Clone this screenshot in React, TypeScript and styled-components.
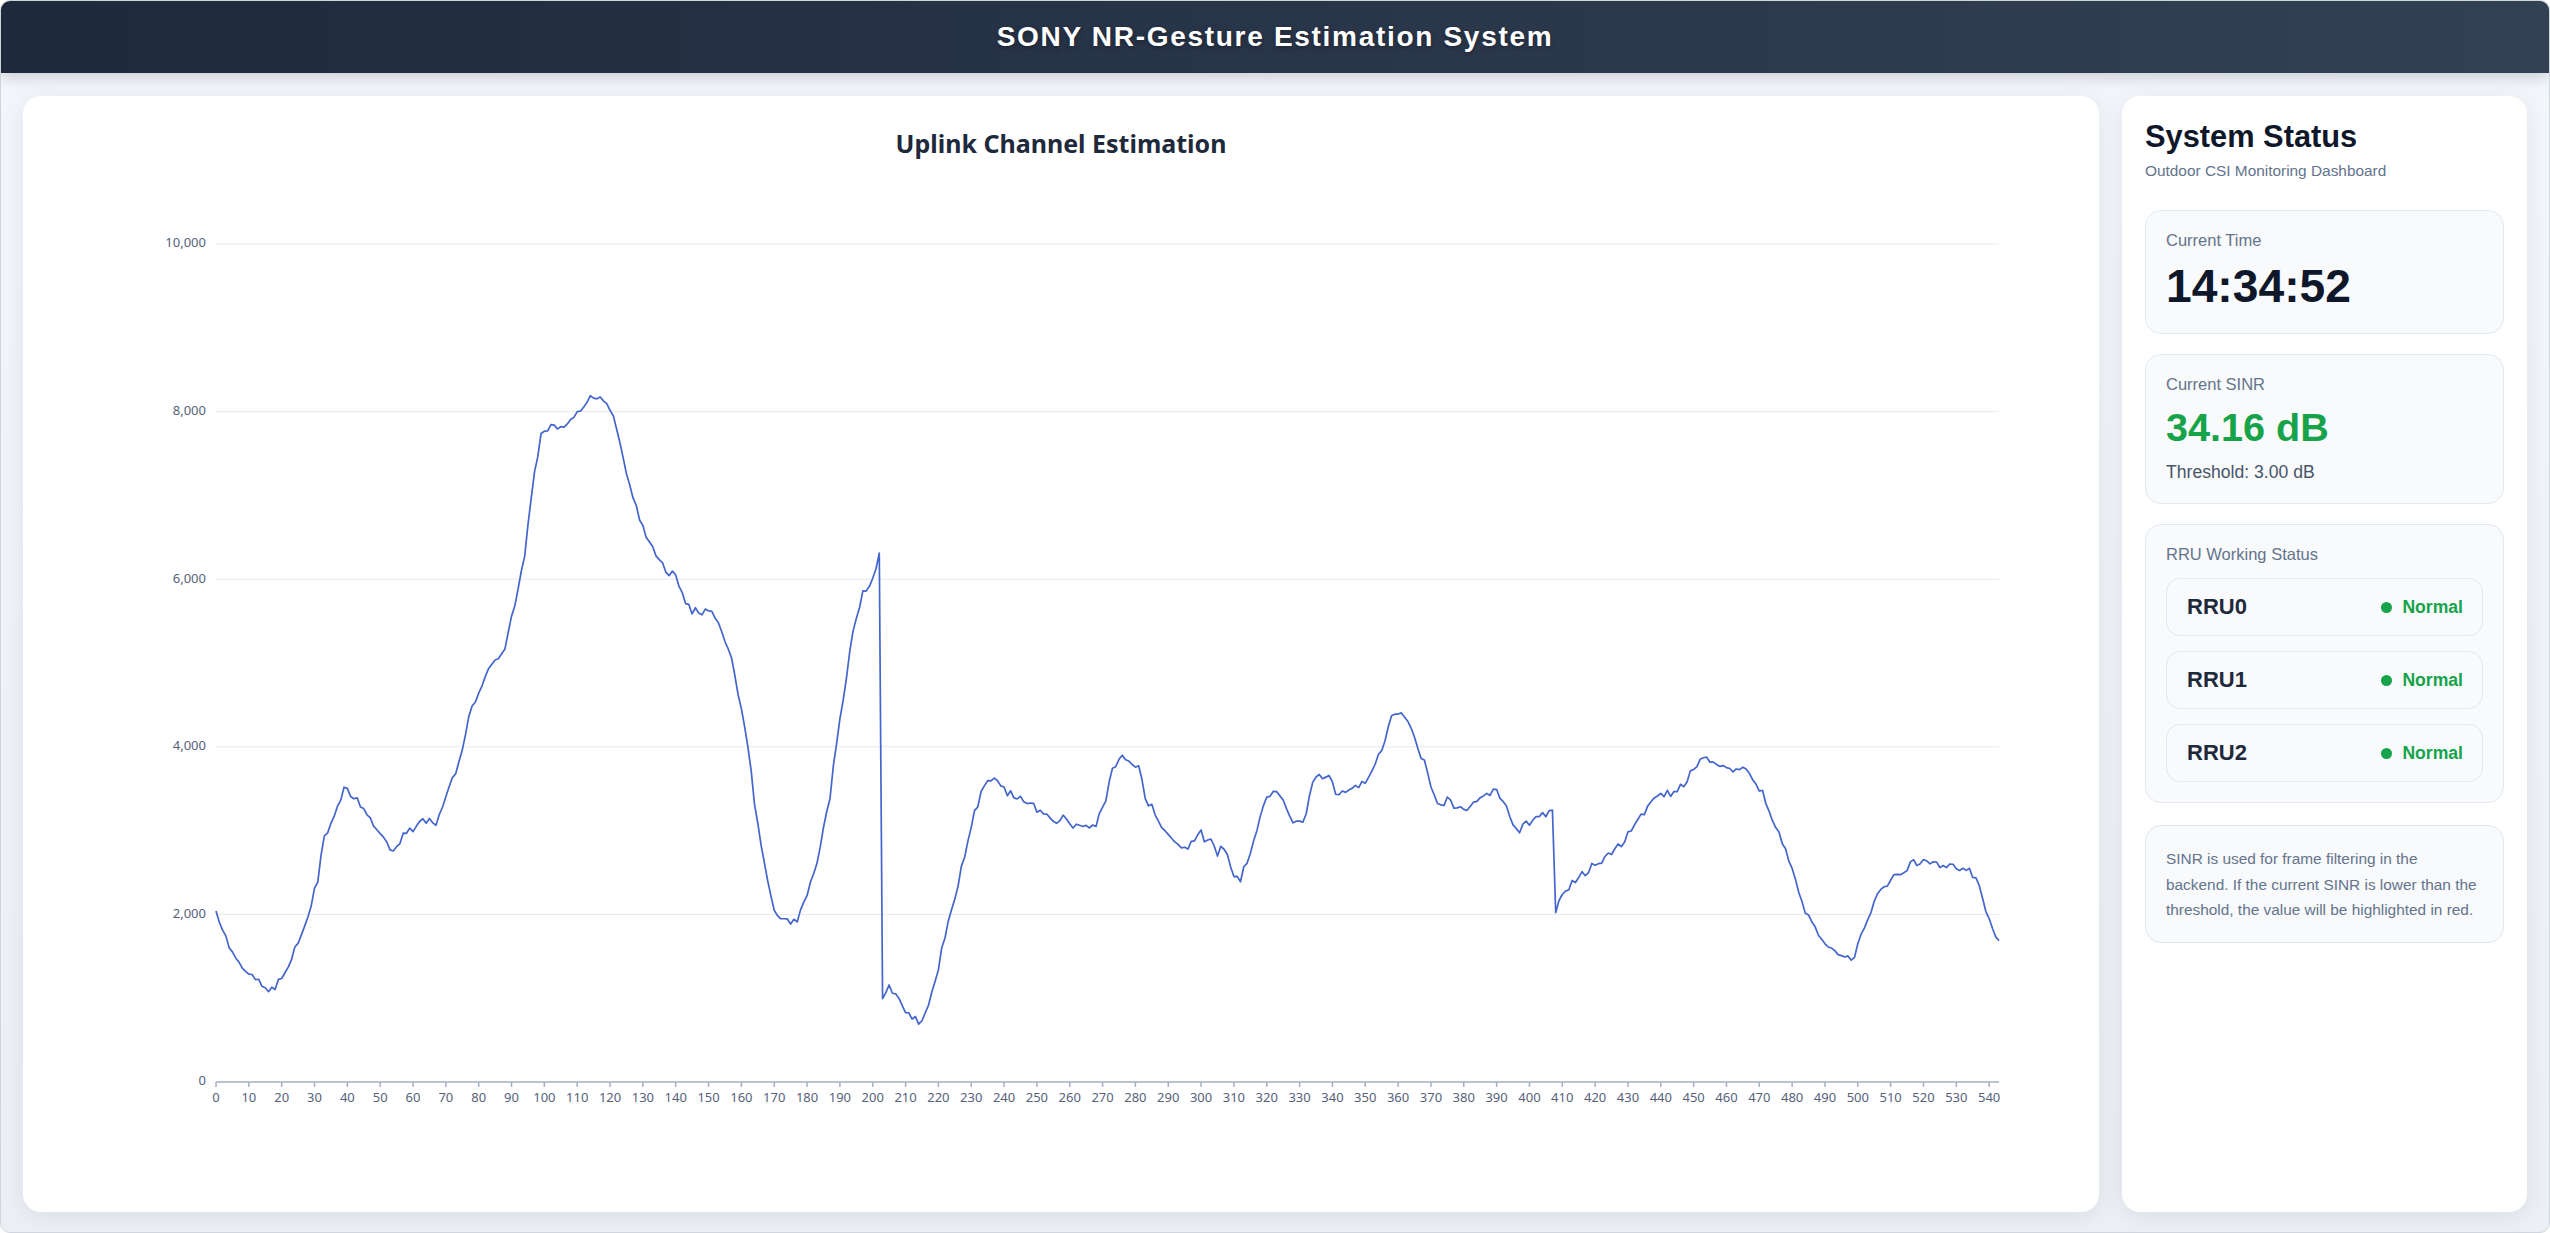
import React, { useMemo } from 'react';
import styled, { createGlobalStyle } from 'styled-components';

const SANS = `'Liberation Sans', Arial, sans-serif`;
const CHART_FONT = `'Noto Sans', 'Open Sans', sans-serif`;

const GREEN = '#16a34a';
const SLATE_900 = '#0f172a';
const SLATE_800 = '#1e293b';
const SLATE_600 = '#475569';
const SLATE_500 = '#64748b';
const BORDER = '#e2e8f0';
const BOX_BG = '#f8fafc';

// rough shape of the channel estimation trace, [index, value]
const KEYS: [number, number][] = [
  [0, 2050], [3.5, 1650], [6, 1456], [8.4, 1360], [11, 1262], [13.4, 1204], [16, 1068], [17, 1087],
  [21, 1320], [26, 1748], [28, 2000], [31, 2427], [33, 2913], [37, 3300], [39, 3480], [43, 3400],
  [45.6, 3200], [49, 3010], [53, 2777], [54, 2740], [57, 2950], [60.4, 3010], [63, 3127], [67, 3088],
  [70, 3400], [74, 3787], [77, 4370], [80, 4600], [84, 4990], [88, 5200], [90, 5530], [94, 6310],
  [97, 7280], [99, 7710], [102.5, 7826], [105, 7807], [107.5, 7900], [110, 8000], [112.5, 8020],
  [114, 8195], [117.4, 8156], [120, 8060], [122, 7770], [125, 7280], [127, 6990], [130, 6600],
  [132, 6450], [135, 6214], [137, 6117], [140, 6020], [142, 5826], [145, 5573], [146, 5630],
  [148, 5573], [150, 5630], [152, 5535], [154.5, 5340], [157, 5050], [159.5, 4560], [162, 3980],
  [164.5, 3200], [167, 2620], [169.4, 2136], [172, 1940], [174, 1903], [177, 1940], [179, 2136],
  [182, 2466], [184, 2816], [187, 3400], [189, 4078], [192, 4855], [194, 5340], [197, 5826],
  [199, 5960], [200.6, 6020], [202, 6350], [203, 970], [204.6, 1165], [206.6, 1030], [209, 913],
  [211.5, 777], [214, 720], [216.5, 835], [219, 1165], [221.4, 1650], [224, 2040], [226.4, 2427],
  [229, 2913], [231, 3204], [234, 3554], [236.3, 3650], [239, 3500], [241, 3456], [244, 3400],
  [246, 3340], [251, 3243], [256, 3107], [258.6, 3165], [261, 3050], [263.6, 3107], [266, 3010],
  [268.5, 3107], [271, 3400], [273.5, 3787], [276, 3864], [278.4, 3787], [281, 3787], [283, 3400],
  [286, 3204], [288, 3010], [291, 2913], [293, 2816], [296, 2777], [298, 2913], [300, 2970],
  [302, 2855], [303, 2913], [305, 2720], [307, 2816], [310, 2466], [312, 2427], [315.6, 2816],
  [318, 3204], [320.5, 3400], [323, 3456], [325.5, 3300], [328, 3107], [330.4, 3107], [332, 3204],
  [334, 3590], [337, 3650], [339, 3690], [341, 3437], [344, 3495], [348, 3495], [350, 3590],
  [352.7, 3748], [355, 3980], [357.7, 4330], [360, 4427], [361.6, 4370], [363.6, 4270], [366, 3980],
  [368.6, 3787], [371, 3400], [373, 3300], [375, 3360], [377.5, 3300], [380, 3262], [382.4, 3300],
  [385, 3437], [387.4, 3437], [390, 3476], [392, 3360], [395, 3107], [397, 3010], [400, 3107],
  [402, 3204], [405, 3204], [407, 3262], [408, 2040], [410, 2233], [412, 2330], [414.6, 2427],
  [419.6, 2583], [424.6, 2719], [429.5, 2913], [434.5, 3204], [439, 3400], [442, 3456], [444, 3437],
  [447, 3554], [449, 3690], [452, 3845], [454, 3864], [457, 3787], [459, 3787], [461.7, 3690],
  [464, 3728], [466.7, 3690], [469, 3590], [471.6, 3400], [474, 3107], [476.6, 2913], [479, 2620],
  [481.5, 2330], [484, 2040], [486.5, 1884], [489, 1709], [491.4, 1592], [494, 1495], [496.4, 1456],
  [499, 1495], [501, 1748], [504, 2000], [506, 2272], [509, 2369], [511, 2466], [514, 2525],
  [516, 2602], [518.7, 2622], [521, 2641], [524, 2583], [526, 2544], [528.6, 2563], [531, 2525],
  [533.5, 2544], [536, 2427], [538.5, 2136], [541, 1845], [543, 1650],
];

const POINTS = 544;

const buildSeries = () => {
  let seed = 20240611;
  const rand = () => {
    seed = (seed * 16807) % 2147483647;
    return seed / 2147483647;
  };
  const out: number[] = [];
  let k = 0;
  for (let i = 0; i < POINTS; i++) {
    while (k < KEYS.length - 2 && KEYS[k + 1][0] < i) k++;
    const [x0, y0] = KEYS[k];
    const [x1, y1] = KEYS[k + 1];
    const t = x1 === x0 ? 0 : Math.min(1, Math.max(0, (i - x0) / (x1 - x0)));
    out.push(y0 + (y1 - y0) * t + (rand() - 0.5) * 90);
  }
  return out;
};

// chart geometry (px, inside the svg)
const W = 2028;
const H = 1022;
const PLOT_L = 169;
const PLOT_R = 1952;
const PLOT_T = 78;
const PLOT_B = 916;
const Y_MAX = 10000;

const xAt = (i: number) => PLOT_L + (i * (PLOT_R - PLOT_L)) / (POINTS - 1);
const yAt = (v: number) => PLOT_B - (v / Y_MAX) * (PLOT_B - PLOT_T);

const GlobalStyle = createGlobalStyle`
  html, body {
    margin: 0;
    padding: 0;
    background: #ffffff;
  }
  * {
    box-sizing: border-box;
  }
`;

const UplinkChart = () => {
  const series = useMemo(buildSeries, []);
  const path = series
    .map((v, i) => `${i === 0 ? 'M' : 'L'}${xAt(i).toFixed(2)},${yAt(v).toFixed(2)}`)
    .join(' ');
  const yTicks = [0, 2000, 4000, 6000, 8000, 10000];
  const xTicks = Array.from({ length: 55 }, (_, i) => i * 10);

  return (
    <ChartSvg width={W} height={H} viewBox={`0 0 ${W} ${H}`}>
      {yTicks.map((v) => (
        <g key={v}>
          {v > 0 && <GridLine x1={PLOT_L} x2={PLOT_R} y1={yAt(v)} y2={yAt(v)} />}
          <AxisLabel x={PLOT_L - 10} y={yAt(v)} textAnchor="end" dominantBaseline="middle">
            {v.toLocaleString('en-US')}
          </AxisLabel>
        </g>
      ))}
      <AxisLine x1={PLOT_L} x2={PLOT_R} y1={PLOT_B} y2={PLOT_B} />
      {xTicks.map((i) => (
        <g key={i}>
          <AxisLine x1={xAt(i)} x2={xAt(i)} y1={PLOT_B} y2={PLOT_B + 5} />
          <AxisLabel x={xAt(i)} y={PLOT_B + 20} textAnchor="middle">
            {i}
          </AxisLabel>
        </g>
      ))}
      <Trace d={path} />
    </ChartSvg>
  );
};

const RRUS = ['RRU0', 'RRU1', 'RRU2'];

const App = () => (
  <>
    <GlobalStyle />
    <Frame>
      <Header>
        <HeaderTitle>SONY NR-Gesture Estimation System</HeaderTitle>
      </Header>
      <Main>
        <ChartCard>
          <ChartTitle>Uplink Channel Estimation</ChartTitle>
          <UplinkChart />
        </ChartCard>
        <StatusPanel>
          <PanelTitle>System Status</PanelTitle>
          <PanelSubtitle>Outdoor CSI Monitoring Dashboard</PanelSubtitle>
          <BoxStack>
            <InfoBox>
              <BoxLabel>Current Time</BoxLabel>
              <TimeValue>14:34:52</TimeValue>
            </InfoBox>
            <InfoBox>
              <BoxLabel>Current SINR</BoxLabel>
              <SinrValue $ok>34.16 dB</SinrValue>
              <Threshold>Threshold: 3.00 dB</Threshold>
            </InfoBox>
            <InfoBox>
              <BoxLabel>RRU Working Status</BoxLabel>
              <RruList>
                {RRUS.map((name) => (
                  <RruRow key={name}>
                    <RruName>{name}</RruName>
                    <RruState>
                      <Dot />
                      Normal
                    </RruState>
                  </RruRow>
                ))}
              </RruList>
            </InfoBox>
            <NoteBox>
              SINR is used for frame filtering in the backend. If the current SINR is lower than the
              threshold, the value will be highlighted in red.
            </NoteBox>
          </BoxStack>
        </StatusPanel>
      </Main>
    </Frame>
  </>
);

export default App;

const Frame = styled.div`
  display: flex;
  flex-direction: column;
  height: 100vh;
  border: 1px solid #cfd5dd;
  border-radius: 10px;
  overflow: hidden;
  background: linear-gradient(180deg, #f3f6fa 0%, #eceff4 100%);
  font-family: ${SANS};
`;

const Header = styled.header`
  display: flex;
  align-items: center;
  justify-content: center;
  flex-shrink: 0;
  height: 72px;
  background: linear-gradient(90deg, #1e293b 0%, #334155 100%);
  box-shadow: 0 4px 14px rgba(15, 23, 42, 0.18);
  position: relative;
  z-index: 1;
`;

const HeaderTitle = styled.h1`
  margin: 0;
  font-family: ${SANS};
  font-size: 28px;
  font-weight: 700;
  letter-spacing: 1.7px;
  color: #ffffff;
  text-shadow: 0 2px 4px rgba(0, 0, 0, 0.3);
`;

const Main = styled.main`
  display: flex;
  flex: 1;
  gap: 23px;
  padding: 23px 22px 20px 22px;
  min-height: 0;
`;

const ChartCard = styled.section`
  display: flex;
  flex-direction: column;
  flex: 1;
  padding: 24px;
  background: #ffffff;
  border-radius: 18px;
  box-shadow: 0 4px 24px rgba(15, 23, 42, 0.08);
  overflow: hidden;
`;

const ChartTitle = styled.h2`
  margin: 0;
  height: 46px;
  line-height: 46px;
  text-align: center;
  font-family: ${CHART_FONT};
  font-size: 25px;
  font-weight: 700;
  color: ${SLATE_800};
`;

const ChartSvg = styled.svg`
  display: block;
  flex-shrink: 0;
`;

const GridLine = styled.line`
  stroke: #e6e9ef;
  stroke-width: 1;
`;

const AxisLine = styled.line`
  stroke: #a3afc2;
  stroke-width: 1.5;
`;

const AxisLabel = styled.text`
  font-family: ${CHART_FONT};
  font-size: 13px;
  fill: #56627a;
`;

const Trace = styled.path`
  fill: none;
  stroke: #4466cc;
  stroke-width: 1.7;
  stroke-linejoin: round;
`;

const StatusPanel = styled.aside`
  display: flex;
  flex-direction: column;
  width: 405px;
  flex-shrink: 0;
  padding: 23px;
  background: #ffffff;
  border-radius: 18px;
  box-shadow: 0 4px 24px rgba(15, 23, 42, 0.08);
`;

const PanelTitle = styled.h2`
  margin: 0;
  font-size: 30.8px;
  font-weight: 700;
  color: ${SLATE_900};
`;

const PanelSubtitle = styled.p`
  margin: 7px 0 0;
  font-size: 15.4px;
  color: ${SLATE_500};
`;

const BoxStack = styled.div`
  display: flex;
  flex-direction: column;
  gap: 20px;
  margin-top: 30px;
`;

const InfoBox = styled.div`
  display: flex;
  flex-direction: column;
  padding: 20px 20px 20px;
  background: ${BOX_BG};
  border: 1px solid ${BORDER};
  border-radius: 16px;
`;

const BoxLabel = styled.div`
  font-size: 16.5px;
  color: ${SLATE_500};
`;

const TimeValue = styled.div`
  margin-top: 9px;
  font-size: 46.2px;
  font-weight: 700;
  color: ${SLATE_900};
`;

const SinrValue = styled.div<{ $ok?: boolean }>`
  margin-top: 11px;
  font-size: 39.6px;
  font-weight: 700;
  color: ${(p) => (p.$ok ? GREEN : '#dc2626')};
`;

const Threshold = styled.div`
  margin-top: 12px;
  font-size: 17.6px;
  color: ${SLATE_600};
`;

const RruList = styled.div`
  display: flex;
  flex-direction: column;
  gap: 15px;
  margin-top: 14px;
`;

const RruRow = styled.div`
  display: flex;
  align-items: center;
  justify-content: space-between;
  height: 58px;
  padding: 0 19px 0 20px;
  background: ${BOX_BG};
  border: 1px solid ${BORDER};
  border-radius: 14px;
`;

const RruName = styled.span`
  font-size: 22px;
  font-weight: 700;
  color: ${SLATE_800};
`;

const RruState = styled.span`
  display: flex;
  align-items: center;
  gap: 10px;
  font-size: 17.6px;
  font-weight: 700;
  color: ${GREEN};
`;

const Dot = styled.span`
  width: 11px;
  height: 11px;
  border-radius: 50%;
  background: ${GREEN};
`;

const NoteBox = styled.p`
  margin: 2px 0 0;
  padding: 20px 20px 19px;
  background: ${BOX_BG};
  border: 1px solid ${BORDER};
  border-radius: 16px;
  font-size: 15.4px;
  line-height: 25.5px;
  color: ${SLATE_500};
`;
